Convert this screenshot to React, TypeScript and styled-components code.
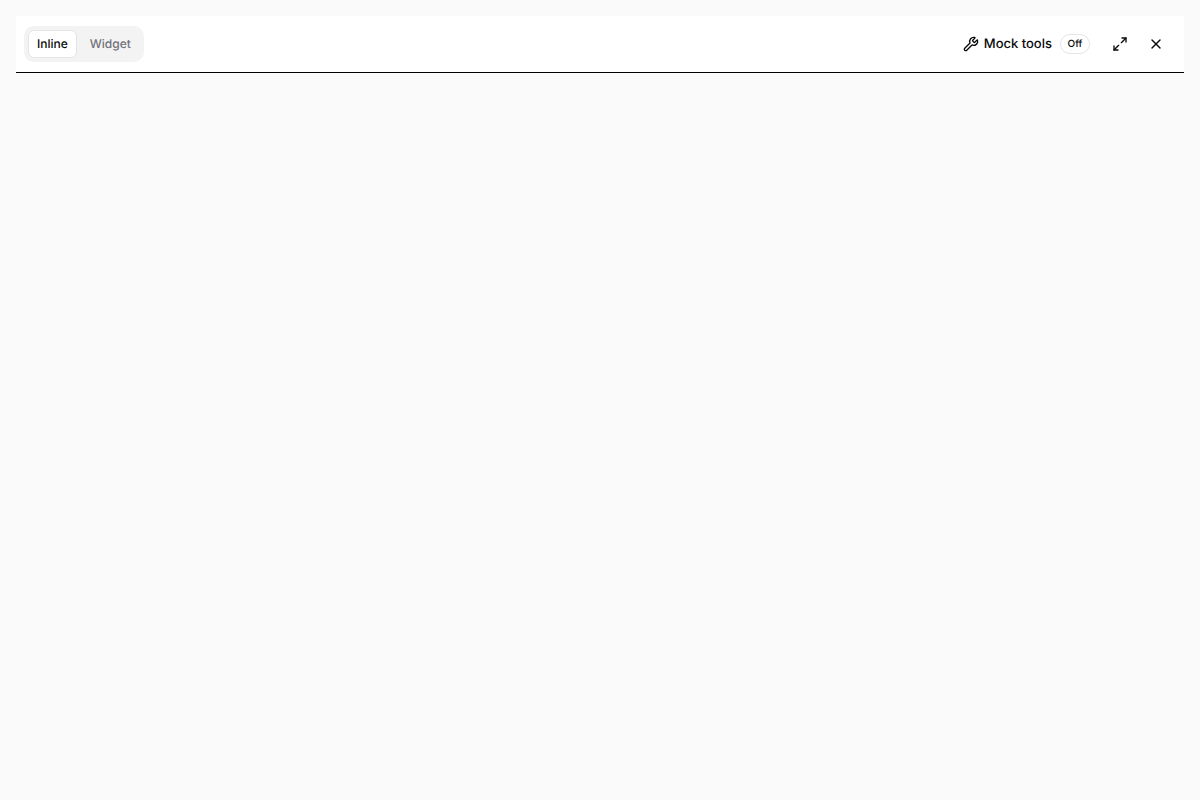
import React, { useState } from "react";
import styled, { createGlobalStyle } from "styled-components";
import { Wrench, Maximize2, X } from "lucide-react";

const GlobalStyle = createGlobalStyle`
  *, *::before, *::after { box-sizing: border-box; }
  body {
    margin: 0;
    background: #fafafa;
    color: #09090b;
    font-family: Inter, "Liberation Sans", sans-serif;
    text-rendering: geometricPrecision;
    -webkit-font-smoothing: antialiased;
  }
  button { font: inherit; color: inherit; text-rendering: inherit; cursor: pointer; }
`;

const Page = styled.main`
  padding: 16px;
`;

const Toolbar = styled.header`
  display: flex;
  align-items: center;
  justify-content: space-between;
  padding: 10px 12px 10px 8px;
  background: #ffffff;
  border-bottom: 1px solid #000000;
`;

const TabList = styled.div`
  display: flex;
  gap: 4px;
  height: 36px;
  padding: 4px;
  border-radius: 10px;
  background: #f3f3f3;
`;

const Tab = styled.button<{ $active: boolean }>`
  padding: 0 8px;
  border: 1px solid ${(p) => (p.$active ? "#e5e5e5" : "transparent")};
  border-radius: 6px;
  background: ${(p) => (p.$active ? "#ffffff" : "transparent")};
  color: ${(p) => (p.$active ? "#09090b" : "#71717a")};
  font-size: 12px;
  font-weight: 450;
  line-height: 16px;
`;

const Actions = styled.div`
  display: flex;
  align-items: center;
  gap: 4px;
`;

const ToolButton = styled.button`
  display: flex;
  align-items: center;
  height: 32px;
  padding: 0 10px;
  border: 0;
  border-radius: 6px;
  background: transparent;
  font-size: 13px;
  font-weight: 500;
  line-height: 20px;
  gap: 5px;
`;

const Badge = styled.span`
  min-width: 30px;
  margin-left: 3px;
  padding: 0 6px;
  border: 1px solid #e5e5e5;
  border-radius: 10px;
  font-size: 10px;
  font-weight: 500;
  line-height: 18px;
  text-align: center;
`;

const IconButton = styled.button`
  display: grid;
  place-items: center;
  width: 32px;
  height: 32px;
  padding: 0;
  border: 0;
  border-radius: 6px;
  background: transparent;
`;

const views = ["Inline", "Widget"];

export default function App() {
  const [view, setView] = useState("Inline");
  const [mock, setMock] = useState(false);
  return (
    <>
      <GlobalStyle />
      <Page>
        <Toolbar>
          <TabList role="tablist" aria-label="View">
            {views.map((name) => (
              <Tab
                key={name}
                type="button"
                role="tab"
                aria-selected={view === name}
                $active={view === name}
                onClick={() => setView(name)}
              >
                {name}
              </Tab>
            ))}
          </TabList>
          <Actions>
            <ToolButton type="button" aria-pressed={mock} onClick={() => setMock(!mock)}>
              <Wrench size={16} aria-hidden />
              <span>Mock tools</span>
              <Badge>{mock ? "On" : "Off"}</Badge>
            </ToolButton>
            <IconButton type="button" aria-label="Expand">
              <Maximize2 size={16} aria-hidden />
            </IconButton>
            <IconButton type="button" aria-label="Close">
              <X size={16} aria-hidden />
            </IconButton>
          </Actions>
        </Toolbar>
      </Page>
    </>
  );
}
